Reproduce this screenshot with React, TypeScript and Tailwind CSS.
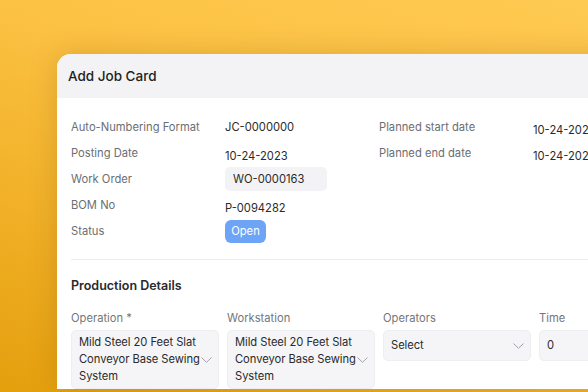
type RowData = { label: string; value: string; kind?: string; drop?: boolean }

const left: RowData[] = [
  { label: 'Auto-Numbering Format', value: 'JC-0000000' },
  { label: 'Posting Date', value: '10-24-2023', drop: true },
  { label: 'Work Order', value: 'WO-0000163', kind: 'input' },
  { label: 'BOM No', value: 'P-0094282', drop: true },
  { label: 'Status', value: 'Open', kind: 'badge' },
]

const right: RowData[] = [
  { label: 'Planned start date', value: '10-24-2023', drop: true },
  { label: 'Planned end date', value: '10-24-2023', drop: true },
]

function Chevron() {
  return (
    <svg width="11" height="6" viewBox="0 0 11 6" fill="none" className="ml-[-2px] shrink-0">
      <polyline points="0.5,0.5 5.5,5.3 10.5,0.5" stroke="#a0a3a8" strokeWidth="1" />
    </svg>
  )
}

function Row({ label, value, kind, drop }: RowData) {
  return (
    <div className="flex h-[26px] items-center">
      <span className="w-[154px] shrink-0 text-[11.2px] text-[#6b6e73]">{label}</span>
      {kind === 'input' ? (
        <span className="flex h-[24px] w-[102px] items-center rounded-[5px] bg-[#f3f3f5] px-[8px] text-[11.2px] text-[#2a2a2a]">
          {value}
        </span>
      ) : kind === 'badge' ? (
        <span className="flex h-[23px] w-[41px] items-center justify-center rounded-[6px] bg-[#6ea4f6] text-[11.2px] text-white">
          {value}
        </span>
      ) : (
        <span className={`whitespace-nowrap text-[11.2px] text-[#2a2a2a] ${drop ? 'pt-[6px]' : ''}`}>{value}</span>
      )}
    </div>
  )
}

function Field({ label, children, chevron = true }: { label: string; children: React.ReactNode; chevron?: boolean }) {
  return (
    <div className="flex w-[148px] shrink-0 flex-col">
      <span className="mb-[3px] text-[11.2px] leading-[17px] text-[#73767b]">{label}</span>
      <div className="flex items-center rounded-[5px] border border-[#eceef1] bg-[#f5f5f7] py-[3px] pl-[7px] pr-[6px] text-[11.2px] leading-[17px] tracking-[-0.05px] text-[#2a2a2a]">
        <div className="flex-1">{children}</div>
        {chevron && <Chevron />}
      </div>
    </div>
  )
}

export default function App() {
  return (
    <div
      className="h-[392px] w-[588px] overflow-hidden bg-[linear-gradient(200deg,#ffca52_0%,#fcc244_35%,#f2b22a_65%,#e49f0d_100%)] pl-[57px] pt-[54px]"
      style={{ fontFamily: 'Inter, "Noto Sans", sans-serif' }}
    >
      <div className="w-[620px] overflow-hidden rounded-tl-[14px] bg-white shadow-[0_0_28px_rgba(120,70,0,0.22)]">
        <div className="flex h-[44px] items-center justify-between bg-[#f3f3f5] pl-[11px]">
          <span className="text-[13.5px] font-medium text-[#222]">Add Job Card</span>
          <div className="h-[30px] w-[39px] rounded-[7px] border border-[#dedfe2] bg-white" />
        </div>
        <div className="pl-[14px] pt-[16px]">
          <div className="flex">
            <div className="w-[308px] shrink-0">
              {left.map((r) => (
                <Row key={r.label} {...r} />
              ))}
            </div>
            <div className="w-[308px] shrink-0">
              {right.map((r) => (
                <Row key={r.label} {...r} />
              ))}
            </div>
          </div>
          <div className="mt-[15px] h-px bg-[#ececee]" />
          <div className="mt-[18px] text-[12.5px] font-semibold leading-[16px] text-[#2a2a2a]">Production Details</div>
          <div className="mt-[16px] flex gap-[8px]">
            <Field label="Operation *">Mild Steel 20 Feet Slat Conveyor Base Sewing System</Field>
            <Field label="Workstation">Mild Steel 20 Feet Slat Conveyor Base Sewing System</Field>
            <Field label="Operators">
              <div className="py-[3px]">Select</div>
            </Field>
            <Field label="Time" chevron={false}>
              <div className="py-[3px]">0</div>
            </Field>
          </div>
        </div>
      </div>
    </div>
  )
}
